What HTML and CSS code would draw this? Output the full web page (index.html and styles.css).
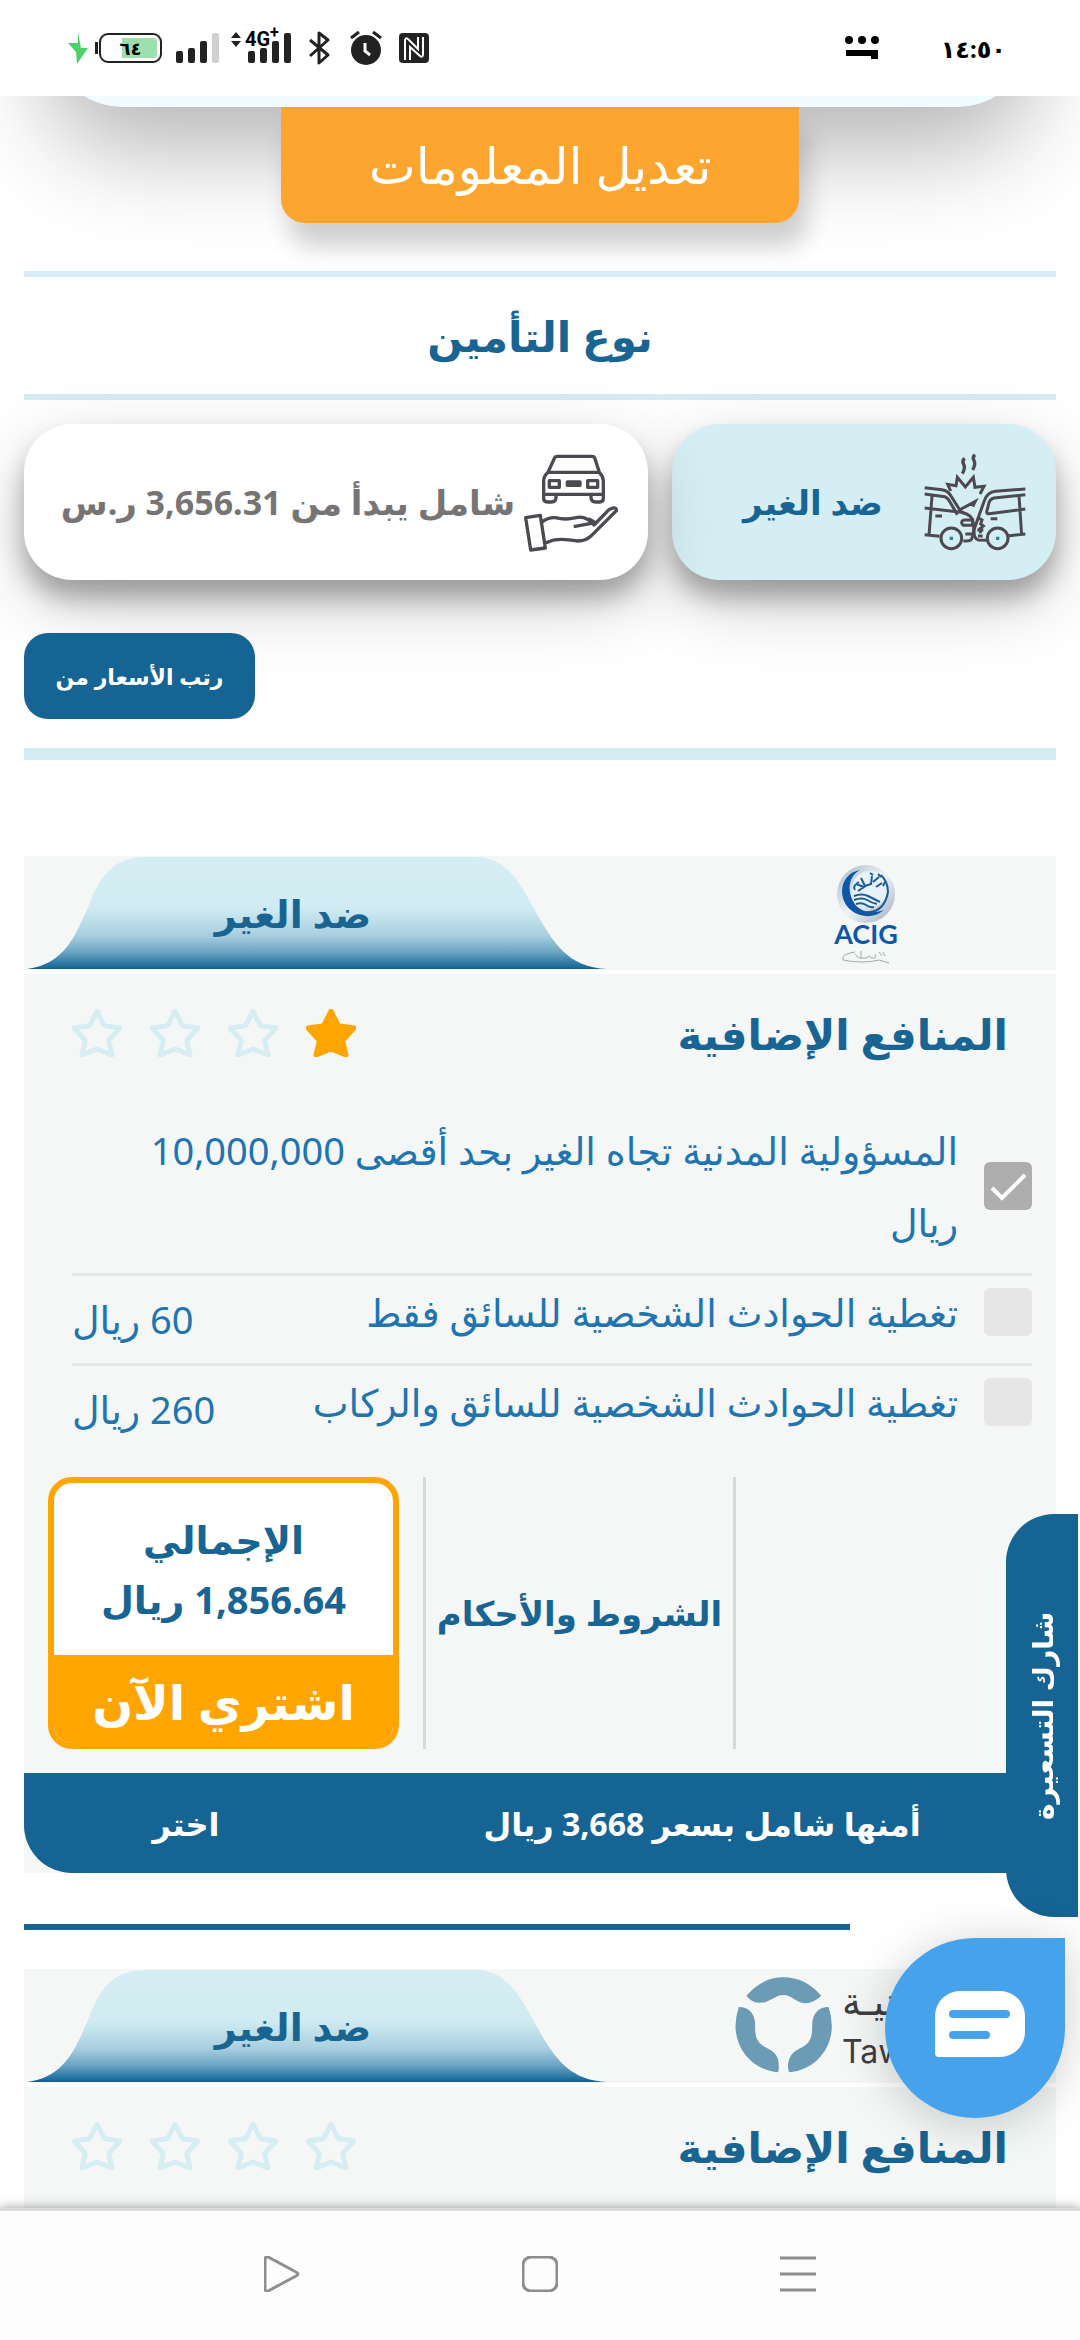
FILE: index.html
```html
<!DOCTYPE html>
<html lang="ar" dir="rtl">
<head>
    <meta charset="UTF-8">
    <meta name="viewport" content="width=device-width, initial-scale=1.0">
    <title>عروض التأمين</title>
    <link rel="stylesheet" href="styles.css">
</head>
<body>

    <!-- Status bar -->
    <header class="status-bar">
        <div class="status-start">
            <time class="clock">١٤:٥٠</time>
            <svg class="dots" viewBox="0 0 34 24" aria-hidden="true">
                <circle cx="4" cy="4" r="4"/><circle cx="17" cy="4" r="4"/><circle cx="30" cy="4" r="4"/>
                <path d="M1 14h32v9h-7v-3H1z"/>
            </svg>
        </div>
        <div class="status-icons">
            <svg class="icon-bolt" viewBox="0 0 20 32"><path d="M10 0l3 16h7L9 32 8 20 0 11l10 0z" fill="#4bd06a"/></svg>
            <div class="battery"><span class="battery-level">٦٤</span></div>
            <svg class="icon-signal" viewBox="0 0 44 30">
                <rect x="0" y="18" width="7" height="12" rx="2"/><rect x="12" y="15" width="7" height="15" rx="2"/>
                <rect x="24" y="8" width="7" height="22" rx="2"/><rect x="36" y="0" width="7" height="30" rx="2" fill="#d0d0d0"/>
            </svg>
            <div class="mobile-data">
                <span class="network">4G<sup>+</sup></span>
                <svg viewBox="0 0 60 30">
                    <path d="M0 5l5-6 5 6zM0 8l5 6 5-6z"/>
                    <rect x="17" y="18" width="7" height="12" rx="2"/><rect x="29" y="15" width="7" height="15" rx="2"/>
                    <rect x="41" y="8" width="7" height="22" rx="2"/><rect x="53" y="0" width="7" height="30" rx="2"/>
                </svg>
            </div>
            <svg class="icon-bluetooth" viewBox="0 0 21 34"><path d="M1 9l18 15-9 8V2l9 7L1 25" fill="none" stroke="#222" stroke-width="3" stroke-linejoin="round"/></svg>
            <svg class="icon-alarm" viewBox="0 0 32 34">
                <circle cx="16" cy="19" r="15"/><path d="M1 7l8-6M31 7l-8-6" stroke="#222" stroke-width="3"/>
                <path d="M15 12v8l5 4" fill="none" stroke="#fff" stroke-width="3"/>
            </svg>
            <svg class="icon-nfc" viewBox="0 0 30 30">
                <rect width="30" height="30" rx="4"/>
                <path d="M6 27V8q0-4 3-2l10 10V4M11 27V14l10 9q3 2 3-2V4" fill="none" stroke="#fff" stroke-width="2"/>
            </svg>
        </div>
    </header>

    <div class="viewport">
        <div class="info-panel"></div>
        <button class="edit-btn">تعديل المعلومات</button>

        <main>
            <h1 class="section-title">نوع التأمين</h1>

            <div class="type-tabs">
                <button class="type-tab active">
                    <svg class="icon-crash" viewBox="0 0 306 300">
                        <g fill="none" stroke="#4c4a50" stroke-width="9">
                            <path d="M122 19q-9 8-3 18t-4 28M153 8q-9 8-3 18t-4 28" stroke-width="10"/>
                            <path d="M80 117l-9-20 25 4 4-25 24 29 24-29 5 30 27-3-12 23"/>
                            <path d="M2 107l52 6q18 3 27 19l29 46 10 6M2 126l60 8q10 4 16 16l22 38"/>
                            <path d="M2 168l110 13q34 8 35 30 6 28-4 50-5 8-25 5M24 132L15 250M2 248l45 5M34 192h20M106 174l48-26-8 16"/>
                            <path d="M304 111l-90 7q-24 3-33 28l-30 84q-4 30 12 34l25 1M304 128l-94 10q-12 3-15 14l-7 28q1 6 7 5l109-14M285 130l8 120M304 246l-54 6M200 200h20"/>
                            <path d="M118 204h28v16h-28q-10-8 0-16M160 196l14 8-4 12 8 6-10 8 2 14M124 246h20M160 234h18M162 252h14"/>
                            <circle cx="82" cy="259" r="31"/><circle cx="221" cy="259" r="31"/>
                        </g>
                        <path d="M77 254h10v10H77zM216 254h10v10h-10z" fill="#2a8595"/>
                    </svg>
                    <span>ضد الغير</span>
                </button>
                <button class="type-tab">
                    <svg class="icon-hand" viewBox="0 0 288 300">
                        <g fill="none" stroke="#4c4a50" stroke-width="10" stroke-linejoin="round">
                            <path d="M78 61L98 17q2-4 8-4h104q6 0 8 4l14 44M78 61h154M78 61q-13 12-13 26v35q0 5 6 5h168q5 0 5-5V87q0-14-12-26"/>
                            <path d="M65 124v15q0 11 11 11h12q14 0 14-14v-9M244 124v15q0 11-11 11h-12q-14 0-14-14v-9"/>
                            <path d="M82 86h30v20H82zM197 86h30v20h-30zM136 90h38v10h-38z"/>
                            <path d="M11 197l44-7 15 98-44 6zM58 211q22-16 42-14 30 8 62 0 28-8 54 22l45-46q20-12 23 2l-78 78q-15 14-38 14-60-10-82 0l-18 7M155 224l65-12-20-12"/>
                        </g>
                    </svg>
                    <span>شامل يبدأ من 3,656.31 ر.س</span>
                </button>
            </div>

            <div class="sort-row">
                <button class="sort-btn">رتب الأسعار من</button>
            </div>

            <!-- Offer 1 -->
            <article class="offer">
                <div class="offer-head">
                    <div class="offer-logo">
                        <svg class="logo-acig" viewBox="0 0 64 86" role="img" aria-label="ACIG">
                            <defs>
                                <linearGradient id="acigBall" x1="0" y1="0" x2="1" y2="1">
                                    <stop offset="0" stop-color="#a9b7c6"/><stop offset=".5" stop-color="#eef3f8"/><stop offset="1" stop-color="#9fadc0"/>
                                </linearGradient>
                            </defs>
                            <circle cx="32" cy="30" r="29" fill="url(#acigBall)"/>
                            <path d="M26 6C10 9 5 24 10 37c6 14 26 21 40 9-14 5-26 1-31-9C13 25 15 12 26 6z" fill="#0d57a7"/>
                            <circle cx="36" cy="25" r="18" fill="#e6f1f8"/>
                            <g fill="none" stroke="#1d5c94" stroke-width="2">
                                <path d="M20 32q8-3 14 0t12 6M20 36q8-3 13 0t10 4M22 40q6-2 10 1t8 2M30 48q20 2 24-20 0-10-7-17"/>
                                <path d="M21 26q-3-4 4-8M22 20l8 3-6 4M27 14l4 8 6-2 1-8M39 18l6-5M44 10l3 3M42 23l6-4M36 9l3 2M49 22l2-4"/>
                            </g>
                            <text x="32" y="80" text-anchor="middle" class="acig-text">ACIG</text>
                        </svg>
                        <svg class="acig-sign" viewBox="0 0 50 14" aria-hidden="true"><path d="M14 2Q0 4 2 10q20 4 36 0l10 3M14 4l4 4h8q2-4 4 0h4q2-3 0-4M20 1v7M38 2l3 4M42 2l2 4" fill="none" stroke="#a3a8ab" stroke-width="1"/></svg>
                    </div>
                    <div class="offer-type">
                        <svg class="tab-shape" viewBox="0 0 586 114" preserveAspectRatio="none">
                            <defs>
                                <linearGradient id="tabFade" x1="0" y1="0" x2="0" y2="1">
                                    <stop offset="0" stop-color="#d5eef3"/><stop offset=".45" stop-color="#d0ecf2"/>
                                    <stop offset=".7" stop-color="#a9cfdf"/><stop offset=".85" stop-color="#6ba5c3"/>
                                    <stop offset=".97" stop-color="#20709f"/><stop offset="1" stop-color="#165f8e"/>
                                </linearGradient>
                            </defs>
                            <path d="M3 113C40 108 51 82 66 46 78 16 92 1 122 1h330c28 0 42 22 56 48 22 40 36 62 75 64z" fill="url(#tabFade)"/>
                        </svg>
                        <span>ضد الغير</span>
                    </div>
                </div>

                <div class="offer-body">
                    <div class="benefits-head">
                        <h2>المنافع الإضافية</h2>
                        <div class="stars" role="img" aria-label="1 / 4">
                            <svg class="star full" viewBox="0 0 50 48"><use href="#star"/></svg>
                            <svg class="star" viewBox="0 0 50 48"><use href="#star"/></svg>
                            <svg class="star" viewBox="0 0 50 48"><use href="#star"/></svg>
                            <svg class="star" viewBox="0 0 50 48"><use href="#star"/></svg>
                        </div>
                    </div>

                    <ul class="benefits">
                        <li>
                            <input type="checkbox" id="liability" checked disabled>
                            <label for="liability">المسؤولية المدنية تجاه الغير بحد أقصى 10,000,000 ريال</label>
                        </li>
                        <li>
                            <input type="checkbox" id="driver">
                            <label for="driver">تغطية الحوادث الشخصية للسائق فقط</label>
                            <span class="price">60 ريال</span>
                        </li>
                        <li>
                            <input type="checkbox" id="passengers">
                            <label for="passengers">تغطية الحوادث الشخصية للسائق والركاب</label>
                            <span class="price">260 ريال</span>
                        </li>
                    </ul>

                    <div class="summary">
                        <div class="summary-blank"></div>
                        <a href="#terms" class="terms">الشروط والأحكام</a>
                        <div class="total">
                            <div class="buy-box">
                                <p class="total-price">الإجمالي<br>1,856.64 ريال</p>
                                <button class="buy-btn">اشتري الآن</button>
                            </div>
                        </div>
                    </div>
                </div>

                <div class="upgrade">
                    <span class="upgrade-text">أمنها شامل بسعر 3,668 ريال</span>
                    <button class="choose-btn">اختر</button>
                </div>
            </article>

            <hr class="divider">

            <!-- Offer 2 -->
            <article class="offer">
                <div class="offer-head">
                    <div class="offer-logo tawuniya">
                        <div class="tawuniya-name">
                            <span class="name-ar">التعاونيـة</span>
                            <span>Tawuniya</span>
                        </div>
                        <svg class="logo-ring" viewBox="0 0 292 290" aria-hidden="true">
                            <g fill="#6b9bb5" transform="translate(-344 -233)">
                                <path d="M378 290Q425 234 490 234q66 0 114 56-24 23-46 22c-28 0-43-25-68-25-28 0-40 25-75 24q-22-1-37-21z"/>
                                <path d="M355 324q43 1 49 46c1 20-1 35 6 50 15 32 50 25 63 60q5 20 1 41C400 515 345 455 345 380q1-30 10-56z"/>
                                <path d="M626 324q-43 1-49 46c-1 20 1 35-6 50-15 32-50 25-63 60q-9 20-1 41c74-6 129-66 129-141q-1-30-10-56z"/>
                            </g>
                        </svg>
                    </div>
                    <div class="offer-type">
                        <svg class="tab-shape" viewBox="0 0 586 114" preserveAspectRatio="none">
                            <path d="M3 113C40 108 51 82 66 46 78 16 92 1 122 1h330c28 0 42 22 56 48 22 40 36 62 75 64z" fill="url(#tabFade)"/>
                        </svg>
                        <span>ضد الغير</span>
                    </div>
                </div>
                <div class="offer-body">
                    <div class="benefits-head">
                        <h2>المنافع الإضافية</h2>
                        <div class="stars" role="img" aria-label="0 / 4">
                            <svg class="star" viewBox="0 0 50 48"><use href="#star"/></svg>
                            <svg class="star" viewBox="0 0 50 48"><use href="#star"/></svg>
                            <svg class="star" viewBox="0 0 50 48"><use href="#star"/></svg>
                            <svg class="star" viewBox="0 0 50 48"><use href="#star"/></svg>
                        </div>
                    </div>
                </div>
            </article>
        </main>
    </div>

    <button class="share-btn">شارك التسعيرة</button>

    <button class="chat-btn" aria-label="محادثة">
        <svg viewBox="0 0 90 66" aria-hidden="true">
            <path d="M25 0h40a25 25 0 0 1 25 25v16a25 25 0 0 1-25 25H4q-4 0-4-4V25A25 25 0 0 1 25 0z" fill="#fff"/>
            <path d="M18 23h53M18 44h33" stroke="#46a2ea" stroke-width="8" stroke-linecap="round"/>
        </svg>
    </button>

    <!-- Bottom navigation -->
    <nav class="nav-bar">
        <button aria-label="القائمة"><svg viewBox="0 0 36 36"><path d="M0 2h36M0 18h36M0 34h36"/></svg></button>
        <button aria-label="الرئيسية"><svg viewBox="0 0 36 36"><rect x="1" y="1" width="34" height="34" rx="8"/></svg></button>
        <button aria-label="رجوع"><svg viewBox="0 0 36 36"><path d="M1 4q0-5 5-2l26 14q4 2 0 4L6 34q-5 3-5-2z"/></svg></button>
    </nav>

    <svg class="sprite" aria-hidden="true">
        <symbol id="star" viewBox="0 0 50 48">
            <path d="M25 2l7 14 2 1 14 2-11 12v2l3 13-15-6-15 6 3-13v-2L2 19l14-2 2-1z" stroke-width="5" stroke-linejoin="round"/>
        </symbol>
    </svg>

</body>
</html>
```
FILE: styles.css
```css
* {
    box-sizing: border-box;
}

body {
    margin: 0;
    height: 100vh;
    display: flex;
    flex-direction: column;
    overflow: hidden;
    background: #fff;
    color: #186492;
    font-family: "Noto Sans", "DejaVu Sans", sans-serif;
    font-size: 38px;
}

button {
    border: none;
    padding: 0;
    font-family: inherit;
    color: inherit;
    cursor: pointer;
}

/* Status bar */
.status-bar {
    position: relative;
    z-index: 5;
    flex: none;
    display: flex;
    justify-content: space-between;
    align-items: center;
    height: 96px;
    padding: 0 74px 0 68px;
    background: #fff;
    color: #000;
}

.status-start {
    display: flex;
    align-items: center;
    gap: 62px;
}

.clock {
    font-size: 24px;
    font-weight: bold;
}

.dots {
    width: 34px;
    height: 24px;
}

.status-icons {
    display: flex;
    align-items: center;
    direction: ltr;
    fill: #222;
}

.status-icons svg {
    display: block;
    overflow: visible;
}

.icon-bolt {
    width: 20px;
    height: 32px;
    margin-right: 11px;
}

.battery {
    position: relative;
    width: 63px;
    height: 30px;
    margin-right: 14px;
    padding: 3px;
    border: 2px solid #222;
    border-radius: 9px;
}

.battery::before {
    content: "";
    position: absolute;
    left: -6px;
    top: 7px;
    width: 3px;
    height: 12px;
    background: #222;
}

.battery-level {
    display: block;
    height: 20px;
    border-radius: 4px;
    background: linear-gradient(to left, #9be0ad 66%, #fff 66%);
    font-size: 18px;
    font-weight: bold;
    line-height: 20px;
    text-align: center;
}

.icon-signal {
    width: 44px;
    height: 30px;
    margin-right: 11px;
}

.mobile-data {
    position: relative;
    width: 60px;
    height: 30px;
    margin-right: 18px;
}

.network {
    position: absolute;
    left: 14px;
    top: -4px;
    font-family: Roboto, sans-serif;
    font-size: 20px;
    font-weight: bold;
    line-height: 20px;
}

.network sup {
    font-size: 16px;
    line-height: 0;
}

.icon-bluetooth {
    width: 21px;
    height: 34px;
    margin-right: 20px;
}

.icon-alarm {
    width: 32px;
    height: 34px;
    margin-right: 17px;
}

.icon-nfc {
    width: 30px;
    height: 30px;
}

/* Scrolled page */
.viewport {
    flex: 1;
    min-height: 0;
    overflow: hidden;
}

.info-panel {
    height: 300px;
    margin: -289px 48px 0;
    border-radius: 75px;
    background: #f0fcff;
    box-shadow: 0 40px 100px rgba(0, 0, 0, 0.3);
}

.edit-btn {
    position: relative;
    display: block;
    width: 48%;
    height: 116px;
    margin: 0 auto;
    border-radius: 0 0 24px 24px;
    background: #fca62f;
    box-shadow: 8px 24px 24px rgba(0, 0, 0, 0.18);
    color: #fff;
    font-size: 50px;
}

main {
    padding: 48px 24px 0;
}

.section-title {
    margin: 0 0 24px;
    border-top: 6px solid #d5edf2;
    border-bottom: 6px solid #d5edf2;
    font-size: 42px;
    line-height: 117px;
    text-align: center;
}

/* Insurance type */
.type-tabs {
    display: grid;
    grid-template-columns: 384fr 624fr;
    gap: 24px;
}

.type-tab {
    display: flex;
    align-items: center;
    height: 156px;
    padding: 0 30px;
    border-radius: 48px;
    background: #fff;
    box-shadow: 0 18px 24px rgba(0, 0, 0, 0.28), 0 24px 72px rgba(0, 0, 0, 0.2);
    color: #777475;
    font-size: 34px;
    font-weight: bold;
    white-space: nowrap;
}

.type-tab.active {
    background: #d4eef4;
    color: #186492;
}

.type-tab span {
    flex: 1;
    text-align: center;
}

.icon-crash {
    width: 102px;
    height: 100px;
}

.icon-hand {
    width: 96px;
    height: 100px;
}

.sort-row {
    position: relative;
    display: flex;
    justify-content: flex-end;
    padding: 53px 0 29px;
    border-bottom: 12px solid #d4edf2;
}

.sort-btn {
    width: 231px;
    height: 86px;
    border-radius: 24px;
    background: #166494;
    color: #fff;
    font-size: 22px;
    font-weight: bold;
}

/* Offer card */
.offer {
    min-height: 300px;
    background: #f5f7f7;
}

.sort-row + .offer {
    margin-top: 96px;
}

.offer-head {
    display: flex;
    height: 118px;
    border-bottom: 4px solid #fff;
}

.offer-logo {
    flex: 1;
    display: flex;
    flex-direction: column;
    align-items: center;
    padding: 8px 0 0 66px;
}

.logo-acig {
    width: 64px;
    height: 86px;
    overflow: visible;
}

.acig-text {
    fill: #0d57a7;
    font-family: Lato, sans-serif;
    font-size: 27px;
    font-weight: bold;
}

.acig-sign {
    width: 50px;
    height: 14px;
}

.offer-type {
    position: relative;
    width: 586px;
    padding-right: 48px;
    font-size: 38px;
    font-weight: bold;
    line-height: 114px;
    text-align: center;
}

.tab-shape {
    position: absolute;
    inset: 0;
    width: 100%;
    height: 114px;
}

.offer-type span {
    position: relative;
}

.offer-body {
    padding: 24px;
}

.benefits-head {
    display: flex;
    justify-content: space-between;
    align-items: center;
    height: 70px;
    padding: 0 24px;
}

.benefits-head h2 {
    margin: 0;
    font-size: 42px;
}

.stars {
    display: flex;
    gap: 28px;
}

.star {
    width: 50px;
    height: 48px;
    fill: none;
    stroke: #d5edf3;
}

.star.full {
    fill: #ffa500;
    stroke: #ffa500;
}

.sprite {
    display: none;
}

.benefits {
    list-style: none;
    margin: 46px 0 0;
    padding: 0 0 0 24px;
    color: #2074b0;
    line-height: 72px;
}

.benefits li {
    display: flex;
    align-items: flex-start;
    gap: 26px;
    padding-bottom: 8px;
    border-bottom: 3px solid #e5e6e6;
}

.benefits li:last-child {
    border-bottom: none;
}

.benefits input {
    appearance: none;
    flex: none;
    width: 48px;
    height: 48px;
    margin: 12px 0 0;
    border-radius: 6px;
    background: #e6e6e6;
}

.benefits input:checked {
    align-self: center;
    margin: 0 0 7px;
    background: #aeaeae url("data:image/svg+xml,%3Csvg xmlns='http://www.w3.org/2000/svg' viewBox='0 0 48 48'%3E%3Cpath d='M8 26l10 10 23-23' fill='none' stroke='white' stroke-width='4'/%3E%3C/svg%3E");
}

.benefits label {
    flex: 1;
    padding: 0 0 7px 48px;
}

.price {
    padding-top: 7px;
}

.benefits label:not(:last-child) {
    padding-left: 0;
}

.summary {
    display: flex;
    height: 272px;
    margin-top: 24px;
}

.summary-blank {
    flex: 1;
}

.terms {
    width: 313px;
    border-left: 3px solid #d8dada;
    border-right: 3px solid #d8dada;
    color: inherit;
    font-size: 34px;
    font-weight: bold;
    line-height: 272px;
    text-align: center;
    text-decoration: none;
    white-space: nowrap;
}

.total {
    padding: 0 24px;
}

.total {
    padding-left: 0;
}

.buy-box {
    width: 351px;
    height: 272px;
    border: 6px solid #ffa500;
    border-radius: 24px;
    overflow: hidden;
    background: #fff;
}

.total-price {
    margin: 0;
    padding: 26px 0;
    font-size: 38px;
    font-weight: bold;
    line-height: 60px;
    text-align: center;
}

.buy-btn {
    width: 100%;
    height: 94px;
    background: #ffa500;
    color: #fff;
    font-size: 48px;
    font-weight: bold;
    line-height: 88px;
}

.upgrade {
    display: flex;
    align-items: center;
    height: 100px;
    padding-left: 24px;
    border-radius: 0 0 48px 48px;
    background: #166494;
    color: #fff;
    font-weight: bold;
    font-size: 32px;
}

.upgrade-text {
    flex: 1;
    padding-left: 24px;
    text-align: center;
}

.choose-btn {
    width: 276px;
    background: none;
    font-size: 32px;
    font-weight: bold;
}

.divider {
    width: 80%;
    height: 6px;
    margin: 51px auto 39px 0;
    border: none;
    background: #19638f;
}

.offer-logo.tawuniya {
    flex-direction: row;
    justify-content: flex-end;
    align-items: flex-start;
    gap: 10px;
    padding-left: 125px;
}

.logo-ring {
    flex: none;
    width: 97px;
    height: 96px;
}

.tawuniya-name {
    display: flex;
    flex-direction: column;
    align-items: flex-end;
    color: #3d3d42;
    font-family: Inter, "DejaVu Sans", sans-serif;
    font-size: 32px;
    line-height: 54px;
}

.name-ar {
    font-size: 38px;
    line-height: 48px;
}

/* Floating buttons */
.share-btn {
    position: fixed;
    right: 2px;
    bottom: 423px;
    z-index: 10;
    width: 72px;
    height: 403px;
    border-radius: 0 48px 48px 0;
    background: #166494;
    color: #fff;
    font-size: 28px;
    font-weight: bold;
    writing-mode: vertical-rl;
    transform: rotate(180deg);
}

.chat-btn {
    position: fixed;
    right: 15px;
    bottom: 222px;
    z-index: 11;
    display: grid;
    place-items: center;
    width: 180px;
    height: 180px;
    padding: 0 0 8px 10px;
    border-radius: 50% 0 50% 50%;
    background: #46a2ea;
    box-shadow: 0 6px 48px rgba(0, 0, 0, 0.2);
}

.chat-btn svg {
    width: 90px;
    height: 66px;
}

/* Bottom navigation */
.nav-bar {
    position: relative;
    z-index: 12;
    flex: none;
    display: flex;
    justify-content: center;
    gap: 222px;
    height: 132px;
    padding-top: 45px;
    border-top: 3px solid #dcdcdc;
    background: #fdfdfd;
    box-shadow: 0 -1px 10px rgba(0, 0, 0, 0.35);
}

.nav-bar button {
    width: 36px;
    height: 36px;
    background: none;
}

.nav-bar svg {
    display: block;
    fill: none;
    stroke: #8e8e8e;
    stroke-width: 3;
}
```
